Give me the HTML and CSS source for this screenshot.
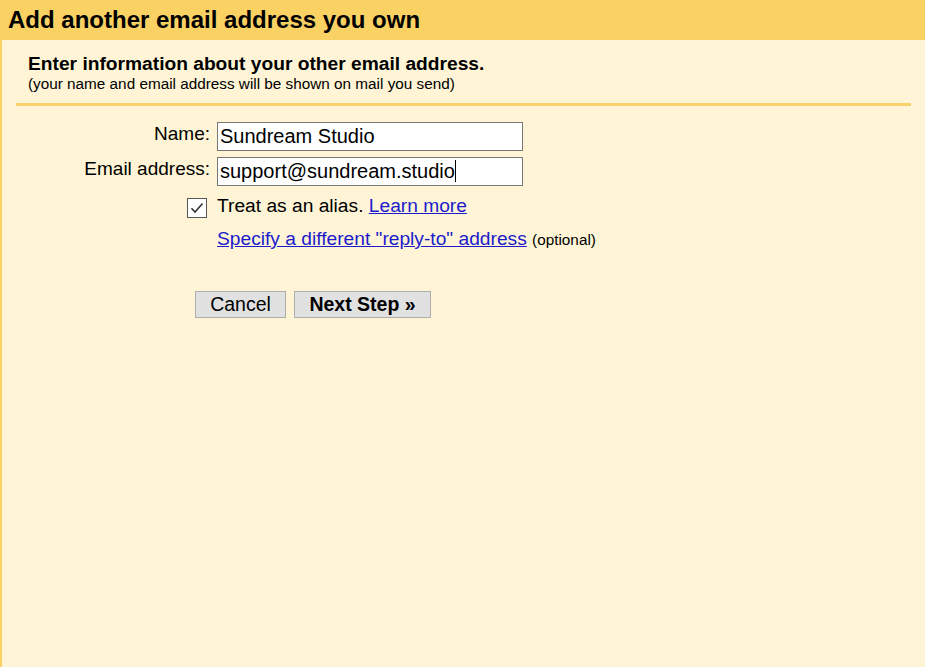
FILE: index.html
```html
<!DOCTYPE html>
<html lang="en">
<head>
<meta charset="utf-8">
<title>Add another email address you own</title>
<link rel="stylesheet" href="styles.css">
</head>
<body>
  <header class="title-bar">Add another email address you own</header>
  <main class="panel">
    <section class="intro">
      <div class="intro-title">Enter information about your other email address.</div>
      <div class="intro-sub">(your name and email address will be shown on mail you send)</div>
    </section>
    <div class="separator"></div>
    <form class="form">
      <label class="label row-1">Name:</label>
      <div class="textbox row-1" role="textbox">Sundream Studio</div>

      <label class="label row-2">Email address:</label>
      <div class="textbox row-2" role="textbox">support@sundream.studio<span class="caret"></span></div>

      <div class="check-cell row-3">
        <span class="checkbox" role="checkbox" aria-checked="true">
          <svg width="14" height="12" viewBox="0 0 14 12"><path d="M1.5 6.2 L5 10 L12.5 1.5" fill="none" stroke="#333" stroke-width="1.6"/></svg>
        </span>
      </div>
      <div class="text-cell row-3">Treat as an alias. <a class="link" href="#">Learn more</a></div>

      <div class="text-cell row-4"><a class="link" href="#">Specify a different "reply-to" address</a> <span class="optional">(optional)</span></div>

      <div class="buttons row-5">
        <button type="button" class="btn">Cancel</button>
        <button type="button" class="btn btn-primary">Next Step »</button>
      </div>
    </form>
  </main>
</body>
</html>
```
FILE: styles.css
```css
html, body {
  margin: 0;
  padding: 0;
}
body {
  font-family: "Liberation Sans", Arial, sans-serif;
  color: #000;
  background: #fff5d6;
  width: 925px;
  height: 667px;
  overflow: hidden;
  display: flex;
  flex-direction: column;
}
.title-bar {
  height: 40px;
  line-height: 40px;
  background: #fad163;
  padding-left: 8px;
  font-size: 24px;
  font-weight: bold;
  white-space: nowrap;
}
.panel {
  flex: 1;
  border-left: 2px solid #fad163;
  background: #fff5d6;
}
.intro {
  padding: 13px 0 0 26px;
}
.intro-title {
  font-size: 19.2px;
  font-weight: bold;
  line-height: 22px;
}
.intro-sub {
  font-size: 15.3px;
  line-height: 18px;
}
.separator {
  height: 3px;
  background: #f9d26a;
  margin: 10px 14px 0 14px;
}
.form {
  display: grid;
  grid-template-columns: 194px 306px;
  column-gap: 7px;
  margin: 16px 0 0 14px;
  font-size: 19px;
}
.row-1 { grid-row: 1; }
.row-2 { grid-row: 2; margin-top: 6px; }
.row-3 { grid-row: 3; margin-top: 8px; }
.row-4 { grid-row: 4; margin-top: 9px; }
.row-5 { grid-row: 5; margin-top: 39px; }
.label {
  grid-column: 1;
  justify-self: end;
  line-height: 24px;
  white-space: nowrap;
}
.textbox {
  grid-column: 2;
  height: 27px;
  line-height: 27px;
  border: 1px solid #777;
  background: #fff;
  font-size: 20px;
  padding-left: 2px;
  white-space: nowrap;
  overflow: hidden;
}
.caret {
  display: inline-block;
  width: 1px;
  height: 22px;
  background: #000;
  vertical-align: -4px;
}
.check-cell {
  grid-column: 1;
  justify-self: end;
  padding-right: 3px;
}
.checkbox {
  display: flex;
  align-items: center;
  justify-content: center;
  width: 18px;
  height: 18px;
  margin-top: 4px;
  border: 1px solid #555;
  background: #fff;
}
.text-cell {
  grid-column: 2;
  line-height: 24px;
  font-size: 19.2px;
  white-space: nowrap;
}
.link {
  color: #1b1bcc;
  text-decoration: underline;
}
.optional {
  font-size: 15.3px;
}
.buttons {
  grid-column: 1 / -1;
  margin-left: 179px;
  display: flex;
  gap: 8px;
}
.btn {
  font-family: "Liberation Sans", Arial, sans-serif;
  font-size: 19.5px;
  height: 27px;
  line-height: 25px;
  padding: 0 14px;
  background: #e1e1e1;
  border: 1px solid #adadad;
  border-radius: 0;
  color: #000;
}
.btn:first-child {
  width: 91px;
}
.btn-primary {
  font-weight: bold;
  width: 137px;
}
```
